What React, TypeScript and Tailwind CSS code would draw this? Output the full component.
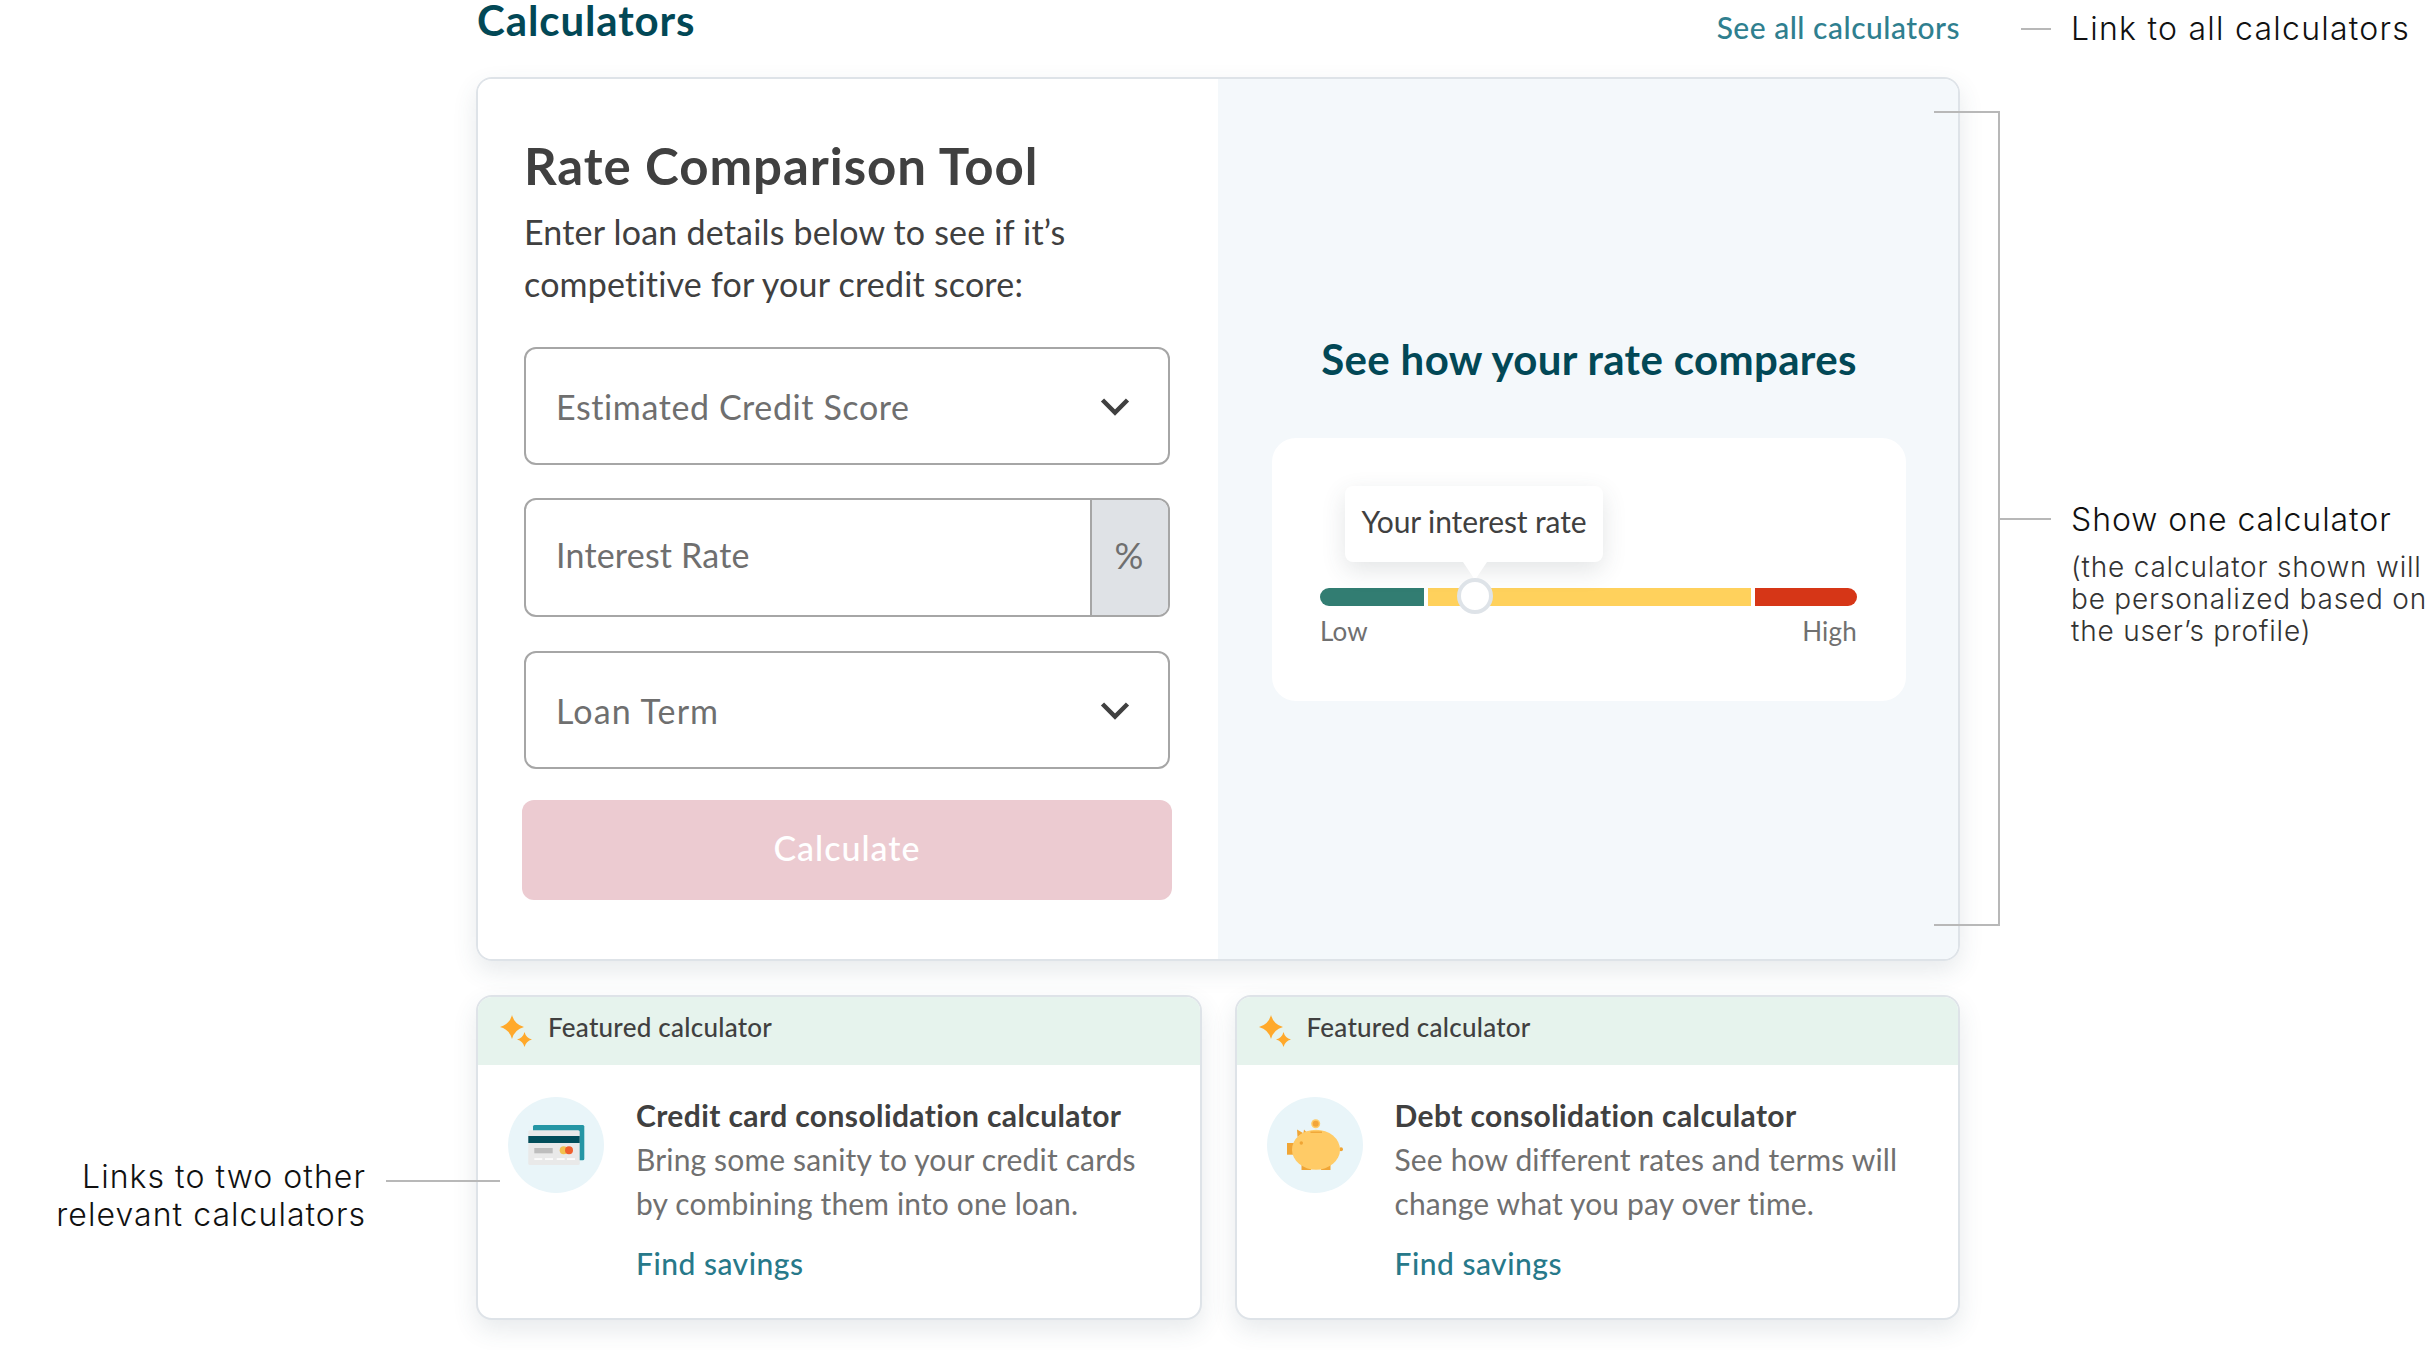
const Chevron = () => (
  <svg width="30" height="19" viewBox="0 0 30 19" fill="none" className="shrink-0">
    <path d="M2.500 3 15 15.500 27.500 3" stroke="#404040" strokeWidth="4.500" />
  </svg>
);

const Sparkle = () => (
  <svg width="32" height="32" viewBox="0 0 32 32" className="shrink-0">
    <path d="M12 0Q14.500 9.500 24 12 14.500 14.500 12 24 9.500 14.500 0 12 9.500 9.500 12 0Z" fill="#ffa92b" />
    <path d="M24.500 17Q26 23 32 24.500 26 26 24.500 32 23 26 17 24.500 23 23 24.500 17Z" fill="#ffa92b" />
  </svg>
);

const CardIcon = () => (
  <svg width="96" height="96" viewBox="0 0 96 96" className="shrink-0">
    <circle cx="48" cy="48" r="48" fill="#e9f5f9" />
    <rect x="25" y="28" width="51.300" height="35.300" rx="1.500" fill="#2596a5" />
    <rect x="20.300" y="33.300" width="51.400" height="34.700" rx="1.500" fill="#e9e9e9" />
    <rect x="20.300" y="39" width="51.400" height="7" fill="#024d5a" />
    <rect x="26.300" y="51" width="18.400" height="5.300" fill="#bdbdbd" />
    <circle cx="55.700" cy="53.300" r="4" fill="#f2c14e" />
    <circle cx="61" cy="53.300" r="4" fill="#f05f2e" />
    <g fill="#fff">
      <rect x="26.300" y="61.300" width="8" height="1.500" />
      <rect x="37" y="61.300" width="8" height="1.500" />
      <rect x="48.700" y="61.300" width="8" height="1.500" />
      <rect x="59" y="61.300" width="8" height="1.500" />
    </g>
  </svg>
);

const PigIcon = () => (
  <svg width="96" height="96" viewBox="0 0 96 96" className="shrink-0">
    <circle cx="48" cy="48" r="48" fill="#e9f5f9" />
    <circle cx="48.700" cy="26.700" r="4.500" fill="#ffcb66" />
    <circle cx="48.700" cy="26.700" r="3" fill="#f2a53a" />
    <rect x="20" y="46" width="7" height="11.700" fill="#f0a535" />
    <path d="M30 32.500 36 36 30.500 40Z" fill="#f0a535" />
    <path d="M37 32.500 43 39 36 39Z" fill="#f0a535" />
    <rect x="34.500" y="66" width="9.500" height="7" fill="#f0a535" />
    <rect x="54" y="66" width="9.500" height="7" fill="#f0a535" />
    <circle cx="74" cy="52.300" r="2" fill="#f0a535" />
    <ellipse cx="49" cy="52.700" rx="24" ry="20" fill="#ffcb66" />
    <rect x="43.500" y="34.500" width="11.500" height="1.400" fill="#f0a535" />
    <circle cx="34.300" cy="46" r="1.700" fill="#f0a535" />
  </svg>
);

const Field = ({ label, tracking }: { label: string; tracking: string }) => (
  <div className="flex h-[118px] w-[646px] items-center justify-between rounded-[12px] border-2 border-[#a6a6a6] bg-white pl-[30px] pr-[38px] text-[34px] text-[#6f6f6f]">
    <span className={`pt-[1px] ${tracking}`}>{label}</span>
    <Chevron />
  </div>
);

const Featured = ({ icon, title, lines }: { icon: React.ReactNode; title: string; lines: string[] }) => (
  <div className="h-[325px] flex-1 overflow-hidden rounded-[16px] border-2 border-[#dee3e8] bg-white shadow-[0_10px_24px_rgba(60,80,100,0.12)]">
    <div className="flex h-[68px] items-center gap-[16px] bg-[#e6f3ed] pl-[22px] text-[26px] font-medium text-[#404040]">
      <Sparkle />
      <span className="mb-[7px] tracking-[0.25px]">Featured calculator</span>
    </div>
    <div className="flex gap-[32px] pl-[30px] pt-[28px]">
      <div className="mt-[4px]">{icon}</div>
      <div>
        <div className="text-[30px] font-bold leading-[44px] tracking-[0.4px] text-[#404040]">{title}</div>
        <div className="text-[30px] leading-[44px] tracking-[0.15px] text-[#707070]">
          {lines.map((l) => (
            <div key={l}>{l}</div>
          ))}
        </div>
        <div className="mt-[16px] text-[30px] font-medium leading-[44px] tracking-[0.5px] text-[#27798a]">Find savings</div>
      </div>
    </div>
  </div>
);

export default function App() {
  return (
    <div className="relative h-[1350px] w-[2436px] overflow-hidden bg-white font-['Lato',sans-serif]">
      <div className="ml-[476px] w-[1484px]">
        <div className="flex h-[77px] items-start justify-between">
          <div className="pl-[1px] text-[42px] font-bold leading-[41px] tracking-[0.9px] text-[#024856]">Calculators</div>
          <div className="mt-[7px] text-[30px] font-medium leading-[40px] tracking-[0.5px] text-[#2f7f8f]">See all calculators</div>
        </div>

        <div className="flex h-[884px] overflow-hidden rounded-[16px] border-2 border-[#dee3e8] shadow-[0_10px_24px_rgba(60,80,100,0.12)]">
          <div className="flex w-[740px] shrink-0 flex-col bg-white pl-[46px] pt-[57px]">
            <div className="text-[51px] font-bold leading-[60px] tracking-[0.95px] text-[#404040]">Rate Comparison Tool</div>
            <div className="mt-[10px] text-[34px] leading-[52px] tracking-[0.2px] text-[#404040]">
              <div>Enter loan details below to see if it’s</div>
              <div>competitive for your credit score:</div>
            </div>
            <div className="mt-[37px]">
              <Field label="Estimated Credit Score" tracking="tracking-[0.6px]" />
            </div>
            <div className="mt-[33px] flex h-[119px] w-[646px] overflow-hidden rounded-[12px] border-2 border-[#a6a6a6] text-[34px] text-[#6f6f6f]">
              <div className="flex flex-1 items-center pb-[7px] pl-[30px] tracking-[0.2px]">Interest Rate</div>
              <div className="flex w-[78px] items-center justify-center border-l-2 border-[#a6a6a6] bg-[#dfe2e6] pb-[6px] pr-[2px] text-[36px]">%</div>
            </div>
            <div className="mt-[34px]">
              <Field label="Loan Term" tracking="tracking-[1.1px]" />
            </div>
            <div className="-ml-[2px] mt-[31px] flex h-[100px] w-[650px] items-center justify-center rounded-[12px] bg-[#eccbd1] pb-[5px] text-[34px] font-medium tracking-[1px] text-white">
              Calculate
            </div>
          </div>

          <div className="flex flex-1 flex-col items-center bg-[#f4f8fb] pl-[2px] pt-[255px]">
            <div className="text-[42px] font-bold leading-[50px] tracking-[0.35px] text-[#024856]">See how your rate compares</div>
            <div className="relative mt-[54px] h-[263px] w-[634px] rounded-[24px] bg-white pl-[48px] pr-[49px] pt-[150px]">
              <div className="flex h-[18px] gap-[4px]">
                <div className="w-[104px] rounded-l-full bg-[#327d72]" />
                <div className="w-[324px] bg-[#ffd15c]" />
                <div className="w-[102px] rounded-r-full bg-[#d63617]" />
              </div>
              <div className="mt-[9px] flex justify-between text-[26px] leading-[32px] tracking-[0.2px] text-[#707070]">
                <span>Low</span>
                <span>High</span>
              </div>
              <div className="absolute left-[73px] top-[48px] flex h-[76px] w-[258px] items-center justify-center rounded-[8px] bg-white pb-[6px] text-[30px] tracking-[-0.1px] text-[#404040] shadow-[0_8px_24px_rgba(60,70,80,0.14)]">
                Your interest rate
              </div>
              <svg width="24" height="18" viewBox="0 0 24 18" className="absolute left-[191px] top-[124px]">
                <path d="M0 0H24L12 18Z" fill="#fff" />
              </svg>
              <div className="absolute left-[185px] top-[140px] size-[36px] rounded-full border-4 border-[#dee3e8] bg-white" />
            </div>
          </div>
        </div>

        <div className="mt-[34px] flex gap-[33px]">
          <Featured
            icon={<CardIcon />}
            title="Credit card consolidation calculator"
            lines={["Bring some sanity to your credit cards", "by combining them into one loan."]}
          />
          <Featured
            icon={<PigIcon />}
            title="Debt consolidation calculator"
            lines={["See how different rates and terms will", "change what you pay over time."]}
          />
        </div>
      </div>

      <div className="absolute left-[2021px] top-[28px] h-[2px] w-[30px] bg-[#b8b8b8]" />
      <div className="absolute left-[2071px] top-[9px] font-['Inter',sans-serif] text-[32px] font-light leading-[40px] tracking-[1.25px] text-[#111]">Link to all calculators</div>

      <div className="absolute left-[1934px] top-[111px] h-[815px] w-[66px] border-y-2 border-r-2 border-[#b8b8b8]" />
      <div className="absolute left-[2000px] top-[518px] h-[2px] w-[51px] bg-[#b8b8b8]" />
      <div className="absolute left-[2071px] top-[500px] font-['Inter',sans-serif] text-[32px] font-light leading-[40px] tracking-[0.95px] text-[#111]">Show one calculator</div>
      <div className="absolute left-[2071px] top-[551px] font-['Inter',sans-serif] text-[28px] font-light leading-[32px] tracking-[0.8px] text-[#333]">
        <div>(the calculator shown will</div>
        <div>be personalized based on</div>
        <div>the user’s profile)</div>
      </div>

      <div className="absolute left-[386px] top-[1180px] h-[2px] w-[114px] bg-[#b8b8b8]" />
      <div className="absolute right-[2070px] top-[1158px] text-right font-['Inter',sans-serif] text-[32px] font-light leading-[38px] tracking-[1.05px] text-[#111]">
        <div>Links to two other</div>
        <div>relevant calculators</div>
      </div>
    </div>
  );
}
